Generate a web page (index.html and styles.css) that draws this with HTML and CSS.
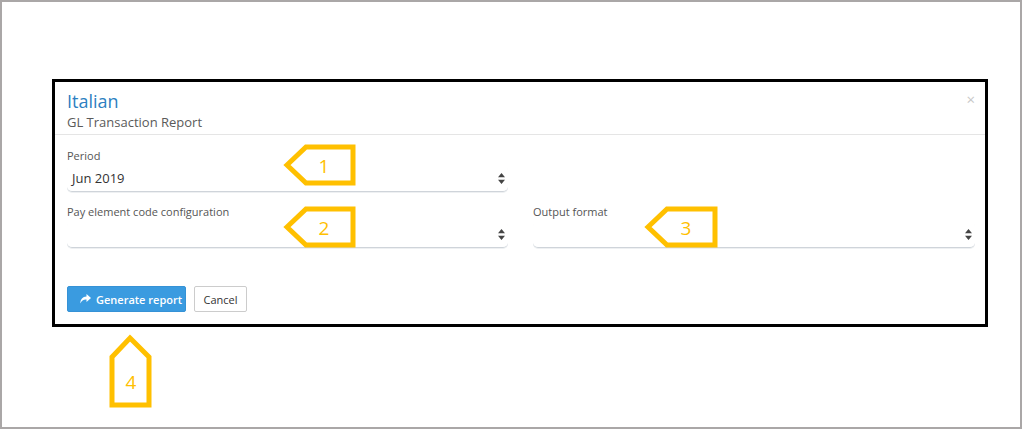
FILE: index.html
```html
<!DOCTYPE html>
<html>
<head>
<meta charset="utf-8">
<link rel="stylesheet" href="styles.css">
</head>
<body>
<div class="frame">
  <div class="dialog">
    <div class="dialog-header">
      <div class="title">Italian</div>
      <div class="subtitle">GL Transaction Report</div>
      <span class="close">×</span>
    </div>
    <div class="dialog-body">
      <div class="grid">
        <div class="field">
          <div class="label">Period</div>
          <div class="select"><span class="value">Jun 2019</span>
            <svg class="spin" width="7" height="11" viewBox="0 0 7 11"><path d="M3.5 0 L7 4.3 L0 4.3 Z M0 6.7 L7 6.7 L3.5 11 Z" fill="#444"/></svg>
          </div>
        </div>
        <div class="field"></div>
        <div class="field">
          <div class="label">Pay element code configuration</div>
          <div class="select"><span class="value"></span>
            <svg class="spin" width="7" height="11" viewBox="0 0 7 11"><path d="M3.5 0 L7 4.3 L0 4.3 Z M0 6.7 L7 6.7 L3.5 11 Z" fill="#444"/></svg>
          </div>
        </div>
        <div class="field">
          <div class="label">Output format</div>
          <div class="select"><span class="value"></span>
            <svg class="spin" width="7" height="11" viewBox="0 0 7 11"><path d="M3.5 0 L7 4.3 L0 4.3 Z M0 6.7 L7 6.7 L3.5 11 Z" fill="#444"/></svg>
          </div>
        </div>
      </div>
      <div class="actions">
        <button class="btn btn-primary">
          <svg width="11" height="10" viewBox="0 0 11 10"><path d="M6.5 0 L11 4 L6.5 8 L6.5 5.6 C3.5 5.4 1.6 6.5 0.3 9.5 C0.5 5 2.6 2.6 6.5 2.4 Z" fill="#fff"/></svg>
          <span>Generate report</span>
        </button>
        <button class="btn btn-default">Cancel</button>
      </div>
    </div>
  </div>
  <svg class="callouts" width="1022" height="429" viewBox="0 0 1022 429">
    <g fill="#fff" stroke="#FFC000" stroke-width="5" stroke-linejoin="miter">
      <path d="M287 165 L306 147 L353 147 L353 183 L306 183 Z"/>
      <path d="M287 227 L306 209 L353 209 L353 245 L306 245 Z"/>
      <path d="M648 227 L667 209 L715 209 L715 245 L667 245 Z"/>
      <path d="M130 338 L149 357 L149 405 L112 405 L112 357 Z"/>
    </g>
    <g class="num" fill="#FFC000">
      <text x="324" y="173">1</text>
      <text x="324" y="235">2</text>
      <text x="686" y="235">3</text>
      <text x="131" y="389">4</text>
    </g>
  </svg>
</div>
</body>
</html>
```
FILE: styles.css
```css
* { box-sizing: border-box; }
html, body { margin: 0; padding: 0; background: #fff; }
body { font-family: "Open Sans", "Liberation Sans", sans-serif; }
.frame {
  position: relative;
  width: 1022px;
  height: 429px;
  border: 2px solid #aaa7a7;
  padding: 77px 0 0 50px;
}
.dialog {
  width: 936px;
  height: 248px;
  border: 3px solid #000;
  background: #fff;
}
.dialog-header {
  position: relative;
  padding: 8px 12px 2px 12px;
  border-bottom: 1px solid #e5e5e5;
}
.title {
  font-size: 18px;
  line-height: 22px;
  color: #2d7fc1;
}
.subtitle {
  font-size: 13px;
  line-height: 19px;
  color: #5a5a5a;
  margin-top: 1px;
}
.close {
  position: absolute;
  right: 10px;
  top: 8px;
  font-size: 15px;
  line-height: 18px;
  color: #c8c8c8;
}
.dialog-body {
  padding: 13px 10px 12px 12px;
}
.grid {
  display: grid;
  grid-template-columns: 441px 442px;
  column-gap: 25px;
  row-gap: 12px;
}
.label {
  font-size: 11px;
  line-height: 15px;
  color: #555;
}
.select {
  margin-top: 2px;
  height: 27px;
  display: flex;
  align-items: center;
  justify-content: space-between;
  padding: 0 3px 0 5px;
  border-bottom: 1px solid #cfd4da;
  border-radius: 5px;
  box-shadow: 0 1px 0 #eef0f2;
}
.value {
  font-size: 13px;
  color: #333;
  line-height: 18px;
}
.spin { display: block; }
.actions {
  display: flex;
  gap: 8px;
  margin-top: 38px;
}
.btn {
  height: 26px;
  font-family: "Open Sans", "Liberation Sans", sans-serif;
  font-size: 11px;
  border-radius: 2px;
  padding: 0;
  display: flex;
  align-items: center;
  gap: 5px;
  white-space: nowrap;
}
.btn-primary {
  width: 119px;
  background: #3a9be0;
  color: #fff;
  border: 1px solid #3592d6;
  font-weight: 600;
  padding-left: 12px;
}
.btn-default {
  width: 53px;
  background: #fff;
  color: #333;
  border: 1px solid #ccc;
  justify-content: center;
}
.callouts {
  position: absolute;
  left: -2px;
  top: -2px;
}
.num text {
  font-family: "Open Sans", "Liberation Sans", sans-serif;
  font-size: 19px;
  text-anchor: middle;
}
```
